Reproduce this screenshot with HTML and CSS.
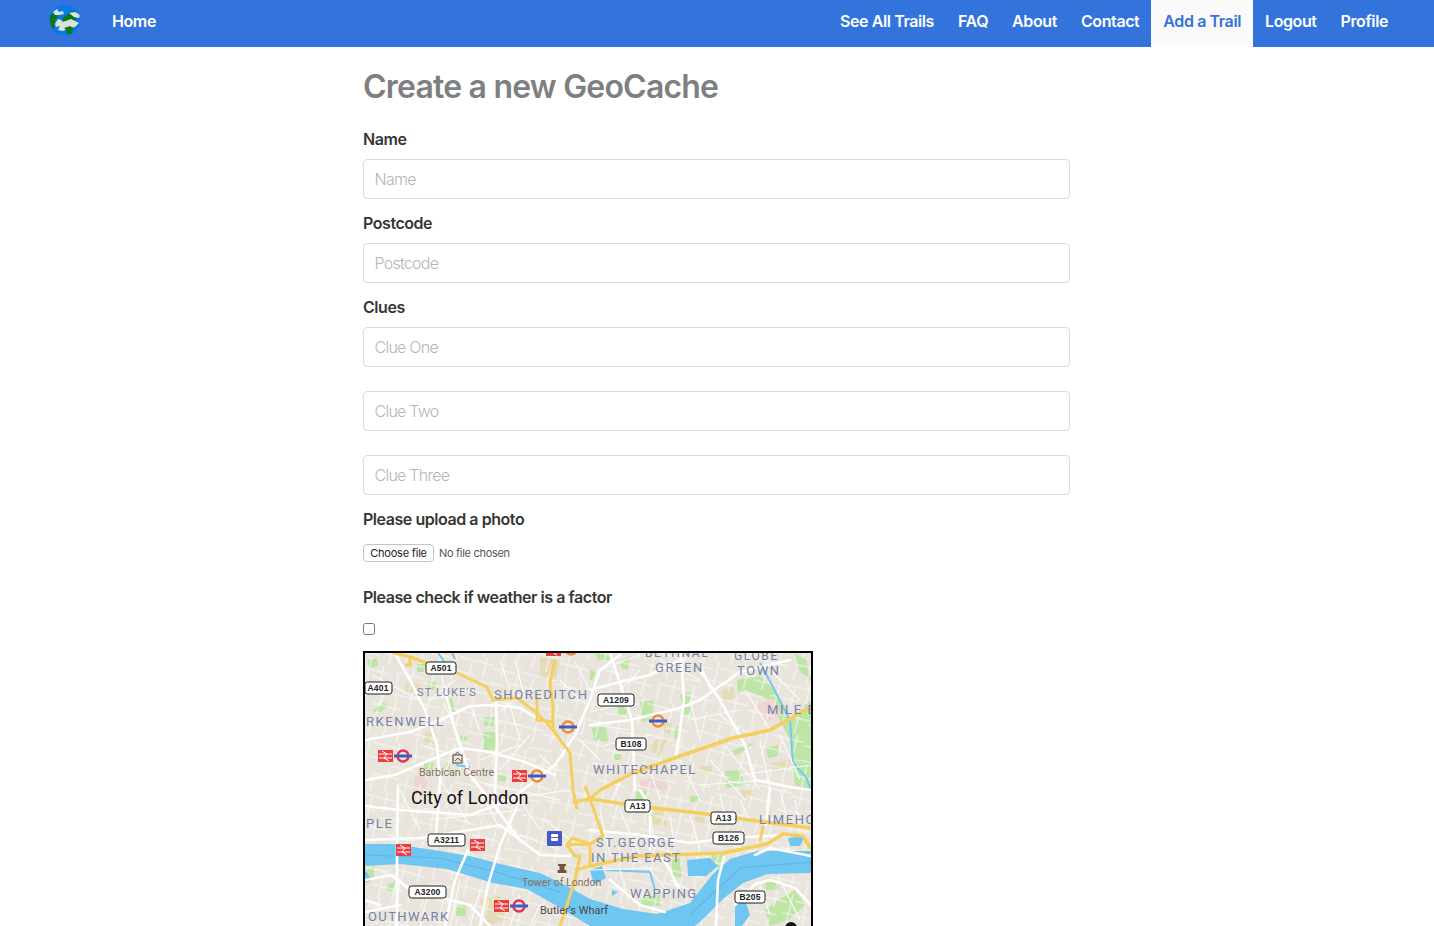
FILE: index.html
```html
<!DOCTYPE html>
<html>
<head>
  <title>Create a new GeoCache</title>
  <link rel="stylesheet" href="styles.css">
</head>
<body>
  <nav class="navbar">
    <div class="nav-left">
      <svg class="logo" width="32" height="32" viewBox="0 0 32 32">
        <defs>
          <clipPath id="globe"><circle cx="16" cy="16" r="15.5"/></clipPath>
        </defs>
        <g clip-path="url(#globe)">
          <rect width="32" height="32" fill="#0b78e8"/>
          <path d="M0 12 L6 8 L9 13 L6 16 L5 25 L2 23 Z" fill="#0a7a14"/>
          <path d="M4 8 L8 5 L10 8 L14 7 L15 10 L10 11 L6 11 Z" fill="#dbe3d8"/>
          <path d="M13 14 L18 11 L22 8 L26 6 L23 12 L29 15 L24 17 L15 18 Z" fill="#0a7a14"/>
          <path d="M20 9 L26 8 L31 11 L30 14 L25 13 Z" fill="#dbe3d8"/>
          <path d="M6 20 L9 15 L12 16 L14 18 L22 15 L28 18 L30 19 L26 23 L20 24 L14 27 L9 26 L11 22 L7 23 Z" fill="#dbe3d8"/>
          <path d="M15 24 L21 22 L24 24 L23 30 L18 30 L17 26 Z" fill="#0a7a14"/>
        </g>
      </svg>
      <a class="nav-item" href="#">Home</a>
    </div>
    <div class="nav-right">
      <a class="nav-item" href="#">See All Trails</a>
      <a class="nav-item" href="#">FAQ</a>
      <a class="nav-item" href="#">About</a>
      <a class="nav-item" href="#">Contact</a>
      <a class="nav-item active" href="#">Add a Trail</a>
      <a class="nav-item" href="#">Logout</a>
      <a class="nav-item" href="#">Profile</a>
    </div>
  </nav>

  <main class="content">
    <h1 class="title">Create a new GeoCache</h1>
    <form>
      <div class="field">
        <label class="label" for="name">Name</label>
        <input class="input" type="text" id="name" placeholder="Name">
      </div>
      <div class="field">
        <label class="label" for="postcode">Postcode</label>
        <input class="input" type="text" id="postcode" placeholder="Postcode">
      </div>
      <div class="field">
        <label class="label" for="clue1">Clues</label>
        <div class="clues">
          <input class="input" type="text" id="clue1" placeholder="Clue One">
          <input class="input" type="text" placeholder="Clue Two">
          <input class="input" type="text" placeholder="Clue Three">
        </div>
      </div>
      <div class="field">
        <div class="label">Please upload a photo</div>
        <div class="file-row">
          <button class="file-btn" type="button">Choose file</button>
          <span class="file-name">No file chosen</span>
        </div>
      </div>
      <div class="field field-check">
        <label class="label" for="weather">Please check if weather is a factor</label>
        <input class="check" type="checkbox" id="weather">
      </div>

      <!-- viewBox uses page coordinates so the map is easier to trace -->
      <svg class="map" width="446" height="446" viewBox="365 653 446 446">
        <defs>
          <pattern id="blocks" width="64" height="52" patternUnits="userSpaceOnUse" patternTransform="rotate(14)">
            <path d="M0 9 H22 M30 6 H64 M0 24 H14 M20 20 H48 M54 25 H64 M0 40 H30 M36 36 H64 M10 0 V17 M26 0 V30 M42 8 V27 M56 0 V20 M8 28 V52 M22 34 V52 M38 38 V52 M52 28 V52" fill="none" stroke="#fbfaf8" stroke-width="0.9"/>
          </pattern>
          <g id="rail">
            <rect x="-8" y="-6" width="15" height="12" fill="#ee3b3b"/>
            <path d="M-7 -2 H6 M-7 2 H6 M-4 -5 L1 -2 L-2 2 L3 5" stroke="#fff" fill="none"/>
          </g>
          <g id="tube-red">
            <circle r="5.5" fill="none" stroke="#e8304a" stroke-width="2.4"/>
            <rect x="-9" y="-1.5" width="18" height="3" fill="#3f5cc4"/>
          </g>
          <g id="tube-orange">
            <circle r="5.5" fill="none" stroke="#ee8a3c" stroke-width="2.4"/>
            <rect x="-9" y="-1.5" width="18" height="3" fill="#3f5cc4"/>
          </g>
        </defs>
        <rect x="365" y="653" width="446" height="446" fill="#e9e5dd"/>

        <!-- parks -->
        <g fill="#bce5a6">
          <path d="M367 660 L377 658 L378 666 L369 668 Z M417 664 L425 664 L424 672 L417 672 Z M384 702 L388 706 L380 712 L372 711 Z M428 682 L436 682 L434 690 L428 690 Z M445 700 L452 698 L455 712 L449 712 Z M484 717 L494 717 L494 726 L484 726 Z M483 732 L495 732 L496 750 L484 750 Z M460 735 L468 737 L464 743 L459 741 Z M424 762 L434 762 L432 772 L424 772 Z M445 763 L450 762 L450 772 L443 772 Z M498 775 L506 775 L506 781 L498 781 Z"/>
          <path d="M640 702 L654 700 L652 720 L642 722 Z M618 706 L628 708 L626 714 L618 716 Z M592 728 L606 726 L608 742 L594 740 Z M614 754 L622 754 L620 760 L614 760 Z M680 694 L690 692 L692 713 L684 715 Z M675 728 L680 726 L678 740 L674 738 Z M595 653 L612 653 L612 660 L598 660 Z M620 662 L630 657 L628 670 L622 668 Z M590 668 L596 674 L592 680 L590 680 Z"/>
          <path d="M737 680 L760 676 L775 690 L790 720 L811 700 L811 790 L795 785 L790 740 L770 700 L745 690 L738 692 Z M733 750 L748 745 L755 742 L746 750 L735 756 Z M766 748 L778 745 L780 756 L768 758 Z M725 771 L740 770 L745 785 L726 788 Z M795 653 L806 660 L811 680 L800 672 Z"/>
          <path d="M672 860 L680 858 L682 878 L672 876 Z M712 855 L724 855 L720 868 L712 866 Z M640 898 L660 895 L660 906 L640 906 Z M765 882 L780 882 L778 890 L766 890 Z M778 900 L795 890 L805 905 L788 920 L770 926 L765 910 Z M366 870 L374 866 L374 880 L366 884 Z M388 884 L395 882 L392 892 L386 890 Z M456 905 L466 905 L466 916 L456 916 Z M636 792 L648 790 L646 800 L636 800 Z M690 796 L700 796 L698 802 L690 802 Z M746 792 L752 790 L752 798 L746 798 Z"/>
        </g>
        <!-- built up and hospital blocks -->
        <g fill="#e4dcb8">
          <path d="M540 658 L560 658 L556 680 L540 678 Z M405 684 L420 684 L418 692 L405 692 Z M425 732 L435 730 L434 744 L424 742 Z M721 690 L733 686 L735 698 L724 702 Z M664 720 L672 722 L670 735 L664 732 Z M770 763 L790 760 L788 770 L772 770 Z M700 766 L712 766 L712 772 L700 772 Z M647 810 L665 810 L668 826 L648 824 Z M695 815 L705 818 L704 826 L695 824 Z M740 790 L755 790 L754 798 L740 798 Z M480 900 L500 895 L508 920 L485 926 Z M655 740 L668 738 L660 756 L650 750 Z"/>
        </g>
        <path d="M757 704 L773 698 L782 715 L766 722 Z M640 780 L665 778 L668 790 L640 790 Z M415 775 L428 778 L424 795 L412 795 Z" fill="#ecd5d2"/>
        <rect x="365" y="653" width="446" height="446" fill="url(#blocks)"/>

        <!-- water -->
        <path d="M365 844 L393 844 L440 851 L470 856 L500 864 L540 873 L567 886 L590 899 L623 909 L657 914 L690 903 L713 874 L730 859 L757 851 L811 851 L811 873 L767 874 L743 883 L723 899 L703 919 L695 926 L590 926 L557 906 L527 889 L493 883 L447 869 L400 864 L365 866 Z" fill="#6fc6f1"/>
        <path d="M687 860 L710 858 L718 866 L706 876 L688 876 Z M788 838 L805 836 L800 846 L790 846 Z M735 905 L745 900 L750 915 L742 926 L735 926 Z M365 870 L372 880 L365 882 Z M590 870 L602 866 L606 878 L594 885 Z M612 890 L618 892 L612 896 Z" fill="#6fc6f1"/>
        <path d="M365 855 L440 858 L500 873 L560 892 M690 915 L740 868 L811 862" fill="none" stroke="#5fb6e6" stroke-width="1.2"/>
        <path d="M760 663 L773 687 L790 720 L793 763 L806 777 L811 790 M438 653 L444 661 M452 653 L455 659 M456 765 L470 767 M606 870 L650 872 M650 872 L655 890" fill="none" stroke="#74c8f2" stroke-width="2"/>

        <!-- minor streets -->
        <g fill="none" stroke="#fbfaf8" stroke-width="1.2">
          <path d="M372 675 L420 700 M440 660 L445 700 M455 680 L430 700 M500 660 L510 690 M515 660 L525 700 M525 690 L500 712 M510 705 L520 740 M470 705 L480 730 M430 700 L470 690 M390 680 L380 705 M445 705 L460 740 M495 720 L520 725 M420 745 L470 760 M455 745 L445 775 M480 760 L520 745 M530 735 L500 770 M540 755 L555 770 M372 780 L410 770 M400 790 L420 830 M440 780 L470 825 M480 790 L500 830 M520 800 L540 830 M500 800 L570 790 M430 820 L520 810 M470 780 L560 800"/>
          <path d="M560 680 L580 700 M575 662 L590 690 M600 670 L640 655 M620 690 L640 670 M590 712 L620 705 M595 725 L630 730 M580 740 L600 760 M605 745 L650 735 M660 660 L700 680 M700 660 L710 690 M690 720 L740 710 M700 740 L690 700 M720 715 L740 730 M745 690 L770 730 M770 670 L800 700 M710 760 L745 800 M680 760 L700 800 M650 770 L660 800 M620 780 L610 805 M760 740 L770 790 M780 735 L800 780 M740 775 L811 765 M725 745 L760 790 M700 785 L770 780"/>
          <path d="M600 810 L610 855 M620 810 L640 855 M650 810 L655 850 M670 815 L675 850 M690 815 L700 850 M720 795 L725 815 M740 800 L750 822 M780 790 L790 830 M795 800 L800 830 M545 820 L570 840 M520 835 L560 850 M590 870 L660 868 M620 870 L628 900 M650 870 L670 895 M670 880 L690 890 M760 885 L770 915 M780 880 L800 920 M380 870 L430 900 M400 880 L395 926 M430 885 L420 926 M460 880 L450 926 M480 890 L470 926 M520 895 L510 926 M540 905 L530 926"/>
        </g>
        <!-- main streets -->
        <g fill="none" stroke="#fff" stroke-width="2.6" stroke-linejoin="round" stroke-linecap="round">
          <path d="M365 740 L410 732 L440 720 L470 706 L495 705 L520 708 L553 728"/>
          <path d="M365 780 L395 775 L430 760 L460 748 L490 752 L525 762 L555 775"/>
          <path d="M393 650 L410 680 L425 710 L437 745 L440 780 L438 810 L435 845"/>
          <path d="M445 690 L455 730 L470 775 L490 800 L520 840"/>
          <path d="M496 700 L497 740 L495 790 L498 812"/>
          <path d="M365 806 L400 810 L470 815 L510 800 L555 765 L575 735 L590 700 L600 670 L620 655"/>
          <path d="M365 840 L420 838 L470 830 L500 825 L540 855 L570 856"/>
          <path d="M398 786 L397 850 L397 926"/>
          <path d="M468 850 L455 880 L445 926"/>
          <path d="M520 800 L500 845 L488 885 L480 926"/>
          <path d="M365 880 L392 875 L410 890 L470 905 L490 926"/>
          <path d="M590 725 L630 720 L680 708 L700 700 L740 672 L790 660"/>
          <path d="M590 690 L620 682 L650 675 L680 660"/>
          <path d="M681 653 L684 700 L680 730 L676 755"/>
          <path d="M700 670 L720 700 L745 745 L755 780 L790 787 L811 790"/>
          <path d="M610 653 L632 720 L635 790"/>
          <path d="M640 790 L650 806 L650 850"/>
          <path d="M590 830 L640 835 L690 843 L730 838 L790 835"/>
          <path d="M724 857 L718 880 L716 926"/>
          <path d="M770 788 L766 825"/>
          <path d="M770 880 L755 884 L735 905 M770 880 L795 888 L811 905"/>
          <path d="M755 855 L770 848 L811 856"/>
          <path d="M365 900 L380 905 M365 912 L400 905"/>
          <path d="M680 892 L670 870 L660 855"/>
          <path d="M610 880 L640 905 L665 912"/>
        </g>
        <!-- yellow roads -->
        <g fill="none" stroke="#f4cf5e" stroke-width="3" stroke-linejoin="round">
          <path d="M393 653 L410 657 L427 663 L457 673 L487 687 L493 700 L517 698 L537 713 L553 730 L570 753 L573 790 L577 809"/>
          <path d="M410 657 L410 665 L405 665"/>
          <path d="M555 660 L550 683 L553 707 L553 730"/>
          <path d="M537 697 L537 720 L553 722"/>
          <path d="M600 790 L633 773 L683 755 L733 738 L770 730 L811 707" stroke-width="3.6"/>
          <path d="M573 802 L590 799 L637 806 L707 814 L757 821 L811 828" stroke-width="3.6"/>
          <path d="M590 799 L603 836 L590 844 L567 845 L575 856 L580 856 L575 880 L560 926"/>
          <path d="M567 845 L572 838 L590 844 L590 866 L575 870"/>
          <path d="M585 786 L590 799 L600 790"/>
          <path d="M590 866 L637 856 L723 853 L767 844 L783 834 L803 836 L811 849" stroke-width="3.6"/>
          <path d="M760 841 L763 826"/>
        </g>

        <!-- road shields -->
        <g class="shields">
          <rect x="426" y="662" width="30" height="12" rx="2.5"/>
          <rect x="365" y="682" width="27" height="12" rx="2.5"/>
          <rect x="598" y="694" width="36" height="12" rx="2.5"/>
          <rect x="616" y="738" width="30" height="12" rx="2.5"/>
          <rect x="625" y="800" width="25" height="12" rx="2.5"/>
          <rect x="711" y="812" width="25" height="12" rx="2.5"/>
          <rect x="713" y="832" width="31" height="12" rx="2.5"/>
          <rect x="735" y="891" width="30" height="12" rx="2.5"/>
          <rect x="428" y="834" width="37" height="12" rx="2.5"/>
          <rect x="409" y="886" width="37" height="12" rx="2.5"/>
        </g>
        <g class="shield-text" text-anchor="middle">
          <text x="441" y="671">A501</text>
          <text x="378" y="691">A401</text>
          <text x="616" y="703">A1209</text>
          <text x="631" y="747">B108</text>
          <text x="637.5" y="809">A13</text>
          <text x="723.5" y="821">A13</text>
          <text x="728.5" y="841">B126</text>
          <text x="750" y="900">B205</text>
          <text x="446.5" y="843">A3211</text>
          <text x="427.5" y="895">A3200</text>
        </g>

        <!-- area names -->
        <g class="area">
          <text x="417" y="696" font-size="11" letter-spacing="1.1">ST LUKE'S</text>
          <text x="494" y="699" font-size="13">SHOREDITCH</text>
          <text x="366" y="726" font-size="13">RKENWELL</text>
          <text x="645" y="657" font-size="12">BETHNAL</text>
          <text x="655" y="672" font-size="13">GREEN</text>
          <text x="734" y="660" font-size="12">GLOBE</text>
          <text x="737" y="675" font-size="13">TOWN</text>
          <text x="767" y="714" font-size="13">MILE E</text>
          <text x="593" y="774" font-size="13" letter-spacing="1.4">WHITECHAPEL</text>
          <text x="759" y="824" font-size="13">LIMEHO</text>
          <text x="366" y="828" font-size="13">PLE</text>
          <text x="596" y="847" font-size="13" letter-spacing="1.45">ST.GEORGE</text>
          <text x="591" y="862" font-size="13" letter-spacing="1.4">IN THE EAST</text>
          <text x="630" y="898" font-size="13" letter-spacing="1.4">WAPPING</text>
          <text x="368" y="921" font-size="13" letter-spacing="1.4">OUTHWARK</text>
        </g>
        <g class="poi">
          <text x="419" y="776">Barbican Centre</text>
          <text x="522" y="886">Tower of London</text>
        </g>
        <text class="poi-dark" x="540" y="914">Butler's Wharf</text>
        <text class="city" x="411" y="804">City of London</text>

        <!-- poi markers -->
        <rect x="453" y="755" width="9" height="8" fill="none" stroke="#6d5a48" stroke-width="1.2"/>
        <path d="M455 755 L457.5 752 L460 755 M455 761 L458 758 L461 761" fill="none" stroke="#6d5a48"/>
        <path d="M558 864 L566 864 L566 866 L564.5 866 L564.5 870 L566.5 870 L566.5 873 L557.5 873 L557.5 870 L559.5 870 L559.5 866 L558 866 Z" fill="#77563c"/>
        <rect x="547" y="831" width="15" height="15" rx="1" fill="#4759c9"/>
        <rect x="551" y="834" width="7" height="7" rx="1" fill="#fff"/>
        <path d="M551 837.5 H558 M551 844 L553 841 M558 844 L556 841" stroke="#4759c9" fill="none"/>

        <!-- rail and tube -->
        <use href="#rail" x="386" y="756"/>
        <use href="#tube-red" x="403" y="756"/>
        <use href="#rail" x="520" y="776"/>
        <use href="#tube-orange" x="537" y="776"/>
        <use href="#rail" x="554" y="650"/>
        <use href="#tube-orange" x="571" y="649"/>
        <use href="#tube-orange" x="568" y="727"/>
        <use href="#tube-orange" x="658" y="721"/>
        <use href="#rail" x="404" y="850"/>
        <use href="#rail" x="478" y="845"/>
        <use href="#rail" x="502" y="906"/>
        <use href="#tube-red" x="519" y="906"/>
        <circle cx="791" cy="928" r="6" fill="#111"/>
      </svg>
    </form>
  </main>
</body>
</html>
```

FILE: styles.css
```css
* {
  box-sizing: border-box;
}

body {
  margin: 0;
  background-color: #fff;
  font-family: Inter, "Liberation Sans", sans-serif;
  font-size: 16px;
  color: #4a4a4a;
}

.navbar {
  display: flex;
  justify-content: space-between;
  height: 47px;
  padding-right: 34px;
  background-color: #3273dc;
}

.nav-left,
.nav-right {
  display: flex;
  align-items: stretch;
}

.logo {
  margin: 4px 19px 0 49px;
}

.nav-item {
  display: flex;
  align-items: center;
  padding: 0 12px 5px;
  color: #fff;
  font-size: 16px;
  font-weight: 600;
  letter-spacing: -0.4px;
  text-decoration: none;
}

.nav-item.active {
  background-color: #fafafa;
  color: #3273dc;
}

.content {
  width: 707px;
  margin-left: 363px;
}

.title {
  margin: 20px 0 20px;
  color: #7f7f7f;
  font-size: 32px;
  font-weight: 600;
  line-height: 40px;
  letter-spacing: -0.8px;
}

.field {
  margin-bottom: 12px;
}

.label {
  display: block;
  margin-bottom: 8px;
  color: #363636;
  font-weight: 600;
  line-height: 24px;
  letter-spacing: -0.45px;
}

.input {
  display: block;
  width: 100%;
  height: 40px;
  padding: 0 10.5px;
  border: 1px solid #dbdbdb;
  border-radius: 4px;
  background-color: #fff;
  font-family: inherit;
  font-size: 16px;
  font-weight: 300;
  letter-spacing: -0.75px;
}

.input::placeholder {
  color: #b5b5b5;
}

.clues {
  display: flex;
  flex-direction: column;
  gap: 24px;
}

.file-row {
  display: flex;
  align-items: center;
  gap: 5px;
  margin-top: 13px;
  padding-bottom: 11px;
}

.file-btn {
  width: 71px;
  height: 18px;
  padding: 0;
  border: 1px solid #c4c4c4;
  border-radius: 4px;
  background-color: #fff;
  color: #222;
  font-family: inherit;
  font-size: 11px;
  letter-spacing: -0.2px;
}

.file-name {
  color: #555;
  font-size: 11px;
  letter-spacing: -0.3px;
}

.field-check {
  margin-bottom: 0;
}

.field-check .label {
  margin-bottom: 14px;
}

.check {
  display: block;
  width: 12px;
  height: 12px;
  margin: 0 0 16px;
}

.map {
  display: block;
  box-sizing: content-box;
  border: 2px solid #000;
}

.shields rect {
  fill: #fff;
  stroke: #1c1c1c;
  stroke-width: 1;
}

.shield-text {
  fill: #222;
  font-family: "Liberation Sans", sans-serif;
  font-size: 8.5px;
  font-weight: 700;
  letter-spacing: 0.2px;
}

.area {
  fill: #7781a6;
  font-family: Roboto, sans-serif;
  letter-spacing: 1.6px;
}

.poi {
  fill: #86705e;
  font-family: Roboto, sans-serif;
  font-size: 10.6px;
}

.poi-dark {
  fill: #4a4a4a;
  font-family: Roboto, sans-serif;
  font-size: 11px;
}

.city {
  fill: #111;
  font-family: Roboto, sans-serif;
  font-size: 18px;
  letter-spacing: 0.1px;
}
```
